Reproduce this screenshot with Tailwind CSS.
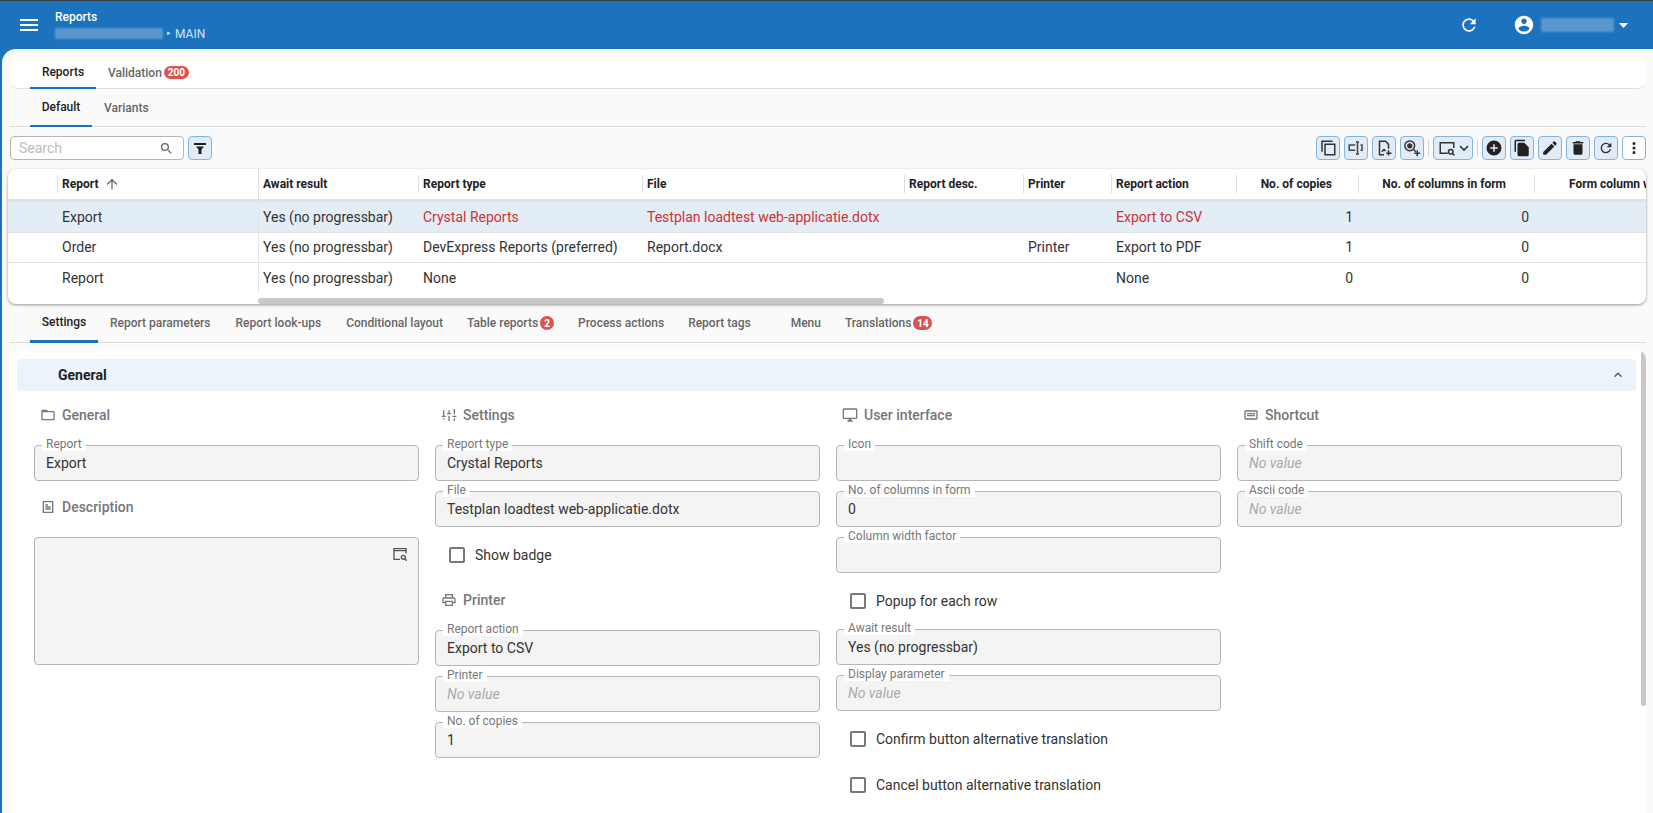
<!DOCTYPE html>
<html><head><meta charset="utf-8"><title>Reports</title>
<script src="https://cdn.jsdelivr.net/npm/@tailwindcss/browser@4"></script>
</head>
<body class="font-['Roboto',sans-serif] bg-[#1c72bc] overflow-hidden">
<div class="h-[813px] w-[1653px] flex flex-col overflow-hidden border-t border-[#3b4045]">
  <header class="h-[48px] shrink-0 flex items-center text-white">
    <svg class="ml-[17px] w-[24px] h-[24px]" viewBox="0 0 24 24" fill="#fff"><path d="M3 18h18v-2H3v2zm0-5h18v-2H3v2zm0-7v2h18V6H3z"/></svg>
    <div class="ml-[14px] flex flex-col">
      <span class="text-[12px] leading-[16px] font-medium">Reports</span>
      <div class="flex items-center mt-[1px]">
        <span class="w-[108px] h-[11px] bg-[#5a97cc] blur-[1px]"></span>
        <span class="ml-[4px] text-[7px] text-[#d5e6f5]">▸</span>
        <span class="ml-[4px] text-[12px] leading-[16px] text-[#d5e6f5]">MAIN</span>
      </div>
    </div>
    <svg class="ml-auto w-[20px] h-[20px]" viewBox="0 0 24 24" fill="#fff"><path d="M17.65 6.35A7.958 7.958 0 0 0 12 4c-4.42 0-7.99 3.58-7.99 8s3.57 8 7.99 8c3.73 0 6.84-2.55 7.73-6h-2.08A5.99 5.99 0 0 1 12 18c-3.31 0-6-2.69-6-6s2.69-6 6-6c1.66 0 3.14.69 4.22 1.78L13 11h7V4l-2.35 2.35z"/></svg>
    <svg class="ml-[34px] w-[22px] h-[22px]" viewBox="0 0 24 24" fill="#fff"><path d="M12 2C6.48 2 2 6.48 2 12s4.48 10 10 10 10-4.48 10-10S17.52 2 12 2zm0 3c1.66 0 3 1.34 3 3s-1.34 3-3 3-3-1.34-3-3 1.34-3 3-3zm0 14.2a7.2 7.2 0 0 1-6-3.22c.03-1.99 4-3.08 6-3.08 1.99 0 5.97 1.09 6 3.08a7.2 7.2 0 0 1-6 3.22z"/></svg>
    <span class="ml-[6px] w-[73px] h-[14px] bg-[#5a97cc] blur-[1px]"></span>
    <svg class="ml-[5px] mr-[25px] w-[9px] h-[5px]" viewBox="0 0 9 5" fill="#fff"><path d="M0 0h9L4.5 5z"/></svg>
  </header>

  <main class="flex-1 ml-[2px] bg-[#fafafa] rounded-tl-[14px] flex flex-col min-h-0 pt-[8px] pl-[6px] pr-[7px]">
    <!-- Top tabs -->
    <nav class="ml-[2px] h-[32px] shrink-0 bg-white rounded-[8px] border-b border-[#dddddd] flex text-[12px] font-medium pl-[20px]">
      <a class="w-[66px] flex items-center justify-center text-[#222] border-b-2 border-[#1c72bc] -mb-px">Reports</a>
      <a class="ml-[12px] flex items-center text-[#666]">Validation<span class="ml-[2px] w-[25px] h-[13px] rounded-full bg-[#d9534f] text-white text-[10px] font-bold flex items-center justify-center">200</span></a>
    </nav>
    <!-- Sub tabs -->
    <nav class="ml-[2px] h-[38px] shrink-0 border-b border-[#dddddd] flex text-[12px] font-medium pl-[20px]">
      <a class="w-[62px] flex items-center justify-center text-[#222] border-b-2 border-[#1c72bc] -mb-px">Default</a>
      <a class="ml-[12px] flex items-center text-[#666]">Variants</a>
    </nav>
    <!-- Toolbar -->
    <div class="ml-[2px] h-[24px] mt-[9px] shrink-0 flex items-center">
      <div class="w-[174px] h-[24px] bg-white rounded-[4px] border border-[#b5b5b5] flex items-center pl-[8px] pr-[9px] text-[14px] text-[#bcbcbc]">Search
        <svg class="ml-auto w-[15px] h-[15px]" viewBox="0 0 24 24" fill="#666"><path d="M15.5 14h-.79l-.28-.27A6.47 6.47 0 0 0 16 9.5 6.5 6.5 0 1 0 9.5 16c1.61 0 3.09-.59 4.23-1.57l.27.28v.79l5 4.99L20.49 19l-4.99-5zm-6 0C7.01 14 5 11.99 5 9.5S7.01 5 9.5 5 14 7.01 14 9.5 11.99 14 9.5 14z"/></svg>
      </div>
      <button class="ml-[4px] w-[24px] h-[24px] rounded-[4px] bg-[#e1ecf6] border border-[#82b4dc] flex items-center justify-center"><svg class="w-[14px] h-[14px]" viewBox="0 0 14 14" fill="#222"><path d="M1 2h12v2H1zM3 5.5h8L8.5 8.5V13h-3V8.5z"/></svg></button>
      <div class="ml-auto flex items-center gap-[4px]">
        <button class="w-[24px] h-[24px] rounded-[4px] bg-[#e1ecf6] border border-[#82b4dc] flex items-center justify-center"><svg class="w-[18px] h-[18px]" viewBox="0 0 24 24" fill="none" stroke="#333" stroke-width="2"><path d="M4 17V3h14"/><rect x="8" y="7" width="13" height="14"/></svg></button>
        <button class="w-[24px] h-[24px] rounded-[4px] bg-[#e1ecf6] border border-[#82b4dc] flex items-center justify-center"><svg class="w-[18px] h-[18px]" viewBox="0 0 24 24" fill="none" stroke="#444" stroke-width="2"><path d="M11 8H3v7h8M18 8h2v7h-2M12 4h4M12 20h4M14 4v16"/></svg></button>
        <button class="w-[24px] h-[24px] rounded-[4px] bg-[#e1ecf6] border border-[#82b4dc] flex items-center justify-center"><svg class="w-[18px] h-[18px]" viewBox="0 0 24 24" fill="none" stroke="#333" stroke-width="2"><path d="M12 21H6V3h8l4 4v6"/><path d="M18 15v7M15 19h7M9 17l3-3 2 2"/></svg></button>
        <button class="w-[24px] h-[24px] rounded-[4px] bg-[#e1ecf6] border border-[#82b4dc] flex items-center justify-center"><svg class="w-[18px] h-[18px]" viewBox="0 0 24 24" fill="none" stroke="#333" stroke-width="2"><circle cx="9" cy="9" r="6.5"/><circle cx="9" cy="9" r="2.5" fill="#333"/><path d="M14 14l3 3M19 15v8M15 19h8"/></svg></button>
        <span class="w-px h-[16px] bg-[#d5d5d5]"></span>
        <button class="w-[40px] h-[24px] rounded-[4px] bg-[#e1ecf6] border border-[#82b4dc] flex items-center justify-center gap-[3px]"><svg class="w-[18px] h-[18px]" viewBox="0 0 24 24" fill="none" stroke="#333" stroke-width="2"><path d="M13 19H3V5h18v7"/><circle cx="17" cy="17" r="3"/><path d="M19 19l3 3"/></svg><svg class="w-[10px] h-[7px]" viewBox="0 0 10 7" fill="none" stroke="#333" stroke-width="1.6"><path d="M1 1l4 4 4-4"/></svg></button>
        <span class="w-px h-[16px] bg-[#d5d5d5]"></span>
        <button class="w-[24px] h-[24px] rounded-[4px] bg-[#e1ecf6] border border-[#82b4dc] flex items-center justify-center"><svg class="w-[18px] h-[18px]" viewBox="0 0 24 24" fill="#222"><path d="M12 2a10 10 0 1 0 0 20 10 10 0 0 0 0-20zm5 11h-4v4h-2v-4H7v-2h4V7h2v4h4v2z"/></svg></button>
        <button class="w-[24px] h-[24px] rounded-[4px] bg-[#e1ecf6] border border-[#82b4dc] flex items-center justify-center"><svg class="w-[18px] h-[18px]" viewBox="0 0 24 24" fill="#222"><path d="M16 1H4a2 2 0 0 0-2 2v14h2V3h12V1zm-1 4H8a2 2 0 0 0-2 2v14a2 2 0 0 0 2 2h11a2 2 0 0 0 2-2V11l-6-6z"/></svg></button>
        <button class="w-[24px] h-[24px] rounded-[4px] bg-[#e1ecf6] border border-[#82b4dc] flex items-center justify-center"><svg class="w-[18px] h-[18px]" viewBox="0 0 24 24" fill="#222"><path d="M3 17.25V21h3.75L17.81 9.94l-3.75-3.75L3 17.25zM20.71 7.04a1 1 0 0 0 0-1.41l-2.34-2.34a1 1 0 0 0-1.41 0l-1.83 1.83 3.75 3.75 1.83-1.83z"/></svg></button>
        <button class="w-[24px] h-[24px] rounded-[4px] bg-[#e1ecf6] border border-[#82b4dc] flex items-center justify-center"><svg class="w-[18px] h-[18px]" viewBox="0 0 24 24" fill="#222"><path d="M6 19c0 1.1.9 2 2 2h8c1.1 0 2-.9 2-2V7H6v12zM19 4h-3.5l-1-1h-5l-1 1H5v2h14V4z"/></svg></button>
        <button class="w-[24px] h-[24px] rounded-[4px] bg-[#e1ecf6] border border-[#82b4dc] flex items-center justify-center"><svg class="w-[16px] h-[16px]" viewBox="0 0 24 24" fill="#333"><path d="M17.65 6.35A7.958 7.958 0 0 0 12 4c-4.42 0-7.99 3.58-7.99 8s3.57 8 7.99 8c3.73 0 6.84-2.55 7.73-6h-2.08A5.99 5.99 0 0 1 12 18c-3.31 0-6-2.69-6-6s2.69-6 6-6c1.66 0 3.14.69 4.22 1.78L13 11h7V4l-2.35 2.35z"/></svg></button>
        <button class="w-[24px] h-[24px] rounded-[4px] bg-white border border-[#82b4dc] flex items-center justify-center"><svg class="w-[18px] h-[18px]" viewBox="0 0 24 24" fill="#222"><path d="M12 8a2 2 0 1 0 0-4 2 2 0 0 0 0 4zm0 2a2 2 0 1 0 0 4 2 2 0 0 0 0-4zm0 6a2 2 0 1 0 0 4 2 2 0 0 0 0-4z"/></svg></button>
      </div>
    </div>
    <!-- Grid -->
    <section class="relative mt-[9px] shrink-0 h-[135px] bg-white rounded-[8px] shadow-[0_1px_3px_rgba(0,0,0,0.4)] overflow-hidden text-[14px] text-[#333]">
      <div class="grid grid-cols-[49px_201px_160px_224px_262px_119px_88px_125px_122px_176px_120px] h-[33px] border-b-[3px] border-[#dfe3e8] text-[12px] font-bold text-[#222] items-center">
        <span></span>
        <span class="h-[18px] border-l border-[#ddd] pl-[4px] flex items-center">Report<svg class="ml-[6px] w-[16px] h-[16px]" viewBox="0 0 24 24" fill="#666"><path d="M4 12l1.41 1.41L11 7.83V20h2V7.83l5.58 5.59L20 12l-8-8-8 8z"/></svg></span>
        <span class="h-full border-l border-[#ddd] pl-[4px] flex items-center">Await result</span>
        <span class="h-[18px] border-l border-[#ddd] pl-[4px] flex items-center">Report type</span>
        <span class="h-[18px] border-l border-[#ddd] pl-[4px] flex items-center">File</span>
        <span class="h-[18px] border-l border-[#ddd] pl-[4px] flex items-center">Report desc.</span>
        <span class="h-[18px] border-l border-[#ddd] pl-[4px] flex items-center">Printer</span>
        <span class="h-[18px] border-l border-[#ddd] pl-[4px] flex items-center">Report action</span>
        <span class="h-[18px] border-l border-[#ddd] pr-[26px] flex items-center justify-end">No. of copies</span>
        <span class="h-[18px] border-l border-[#ddd] pr-[28px] flex items-center justify-end">No. of columns in form</span>
        <span class="h-[18px] border-l border-[#ddd] pl-[34px] flex items-center whitespace-nowrap">Form column width</span>
      </div>
      <div class="grid grid-cols-[49px_201px_160px_224px_262px_119px_88px_125px_122px_176px_120px] h-[31px] bg-[#e3edf6] border-b border-[#dfe3e8] items-center">
        <span></span><span class="pl-[5px]">Export</span>
        <span class="h-full flex items-center border-l border-[#e4e4e4] pl-[4px]">Yes (no progressbar)</span>
        <span class="pl-[5px] text-[#cc3333]">Crystal Reports</span>
        <span class="pl-[5px] text-[#cc3333]">Testplan loadtest web-applicatie.dotx</span>
        <span></span><span></span>
        <span class="pl-[5px] text-[#cc3333]">Export to CSV</span>
        <span class="text-right pr-[5px]">1</span><span class="text-right pr-[5px]">0</span><span></span>
      </div>
      <div class="grid grid-cols-[49px_201px_160px_224px_262px_119px_88px_125px_122px_176px_120px] h-[30px] border-b border-[#e4e4e4] items-center">
        <span></span><span class="pl-[5px]">Order</span>
        <span class="h-full flex items-center border-l border-[#e4e4e4] pl-[4px]">Yes (no progressbar)</span>
        <span class="pl-[5px]">DevExpress Reports (preferred)</span>
        <span class="pl-[5px]">Report.docx</span>
        <span></span><span class="pl-[5px]">Printer</span>
        <span class="pl-[5px]">Export to PDF</span>
        <span class="text-right pr-[5px]">1</span><span class="text-right pr-[5px]">0</span><span></span>
      </div>
      <div class="grid grid-cols-[49px_201px_160px_224px_262px_119px_88px_125px_122px_176px_120px] h-[30px] items-center">
        <span></span><span class="pl-[5px]">Report</span>
        <span class="h-full flex items-center border-l border-[#e4e4e4] pl-[4px]">Yes (no progressbar)</span>
        <span class="pl-[5px]">None</span>
        <span></span><span></span><span></span>
        <span class="pl-[5px]">None</span>
        <span class="text-right pr-[5px]">0</span><span class="text-right pr-[5px]">0</span><span></span>
      </div>
      <div class="absolute left-[250px] bottom-0 w-[626px] h-[6px] rounded-full bg-[#c8c8c8]"></div>
    </section>
    <!-- Detail tabs -->
    <nav class="ml-[2px] h-[39px] shrink-0 border-b border-[#dddddd] flex text-[12px] font-medium pl-[20px]">
      <a class="w-[68px] flex items-center justify-center text-[#222] border-b-[3px] border-[#1c72bc] -mb-px">Settings</a>
      <a class="ml-[12px] flex items-center text-[#666]">Report parameters</a>
      <a class="ml-[25px] flex items-center text-[#666]">Report look-ups</a>
      <a class="ml-[25px] flex items-center text-[#666]">Conditional layout</a>
      <a class="ml-[24px] flex items-center text-[#666]">Table reports<span class="ml-[2px] w-[14px] h-[14px] rounded-full bg-[#d9534f] text-white text-[10px] font-bold flex items-center justify-center">2</span></a>
      <a class="ml-[24px] flex items-center text-[#666]">Process actions</a>
      <a class="ml-[24px] flex items-center text-[#666]">Report tags</a>
      <a class="ml-[40px] flex items-center text-[#666]">Menu</a>
      <a class="ml-[24px] flex items-center text-[#666]">Translations<span class="ml-[2px] w-[19px] h-[14px] rounded-full bg-[#d9534f] text-white text-[10px] font-bold flex items-center justify-center">14</span></a>
    </nav>
    <!-- Form -->
    <section class="relative ml-[2px] mt-[8px] flex-1 bg-white rounded-t-[8px] pt-[8px] pl-[7px] pr-[10px] overflow-hidden">
      <div class="h-[32px] bg-[#ecf3fa] rounded-[4px] flex items-center pl-[41px] pr-[10px] text-[14px] font-bold text-[#222]">General
        <svg class="ml-auto w-[16px] h-[16px]" viewBox="0 0 24 24" fill="#555"><path d="M7.41 15.41 12 10.83l4.59 4.58L18 14l-6-6-6 6z"/></svg>
      </div>
      <div class="grid grid-cols-[385px_385px_385px_385px] gap-x-[16px] pl-[17px] mt-[14px] text-[14px] text-[#333]">
        <!-- col 1 -->
        <div class="flex flex-col">
          <h3 class="h-[20px] mb-[20px] flex items-center pl-[6px] text-[14px] font-medium text-[#777]"><svg class="w-[16px] h-[16px] mr-[6px]" viewBox="0 0 24 24" fill="#777"><path d="M20 6h-8l-2-2H4c-1.1 0-2 .9-2 2v12c0 1.1.9 2 2 2h16c1.1 0 2-.9 2-2V8c0-1.1-.9-2-2-2zm0 12H4V8h16v10z"/></svg>General</h3>
          <div class="relative h-[36px] rounded-[4px] border border-[#b5b5b5] bg-[#f4f4f4] flex items-center pl-[11px] pt-[1px]"><label class="absolute -top-[9px] left-[7px] px-[4px] bg-white text-[12px] leading-[14px] text-[#777]">Report</label>Export</div>
          <h3 class="h-[20px] mt-[16px] mb-[20px] flex items-center pl-[6px] text-[14px] font-medium text-[#777]"><svg class="w-[16px] h-[16px] mr-[6px]" viewBox="0 0 24 24" fill="#777"><path d="M19 3H5a2 2 0 0 0-1 0v18h16V3zM6 5h12v14H6zM8 8h4v2H8zm0 3h8v2H8zm0 3h8v2H8z"/></svg>Description</h3>
          <div class="relative h-[128px] rounded-[4px] border border-[#b5b5b5] bg-[#f4f4f4]">
            <svg class="absolute top-[8px] right-[10px] w-[16px] h-[16px]" viewBox="0 0 24 24" fill="none" stroke="#555" stroke-width="2"><path d="M12 20H3V4h18v7M3 7h18"/><circle cx="17" cy="17" r="3"/><path d="M19 19l3 3"/></svg>
          </div>
        </div>
        <!-- col 2 -->
        <div class="flex flex-col">
          <h3 class="h-[20px] mb-[20px] flex items-center pl-[6px] text-[14px] font-medium text-[#777]"><svg class="w-[16px] h-[16px] mr-[6px]" viewBox="0 0 24 24" fill="#777"><path d="M3 17v2h2v-2zM3 5v8h2V5zM11 21h2v-8h-2zM11 5v4h2V5zM19 17v4h2v-4zM19 3v8h2V3zM1 15h6v-2H1zM9 9h6v2H9zM17 13h6v2h-6z"/></svg>Settings</h3>
          <div class="relative h-[36px] rounded-[4px] border border-[#b5b5b5] bg-[#f4f4f4] flex items-center pl-[11px] pt-[1px]"><label class="absolute -top-[9px] left-[7px] px-[4px] bg-white text-[12px] leading-[14px] text-[#777]">Report type</label>Crystal Reports</div>
          <div class="relative mt-[10px] h-[36px] rounded-[4px] border border-[#b5b5b5] bg-[#f4f4f4] flex items-center pl-[11px] pt-[1px]"><label class="absolute -top-[9px] left-[7px] px-[4px] bg-white text-[12px] leading-[14px] text-[#777]">File</label>Testplan loadtest web-applicatie.dotx</div>
          <div class="h-[36px] mt-[10px] flex items-center pl-[14px]"><span class="w-[16px] h-[16px] rounded-[2px] border-2 border-[#777] bg-white mr-[10px]"></span>Show badge</div>
          <h3 class="h-[20px] mt-[17px] mb-[20px] flex items-center pl-[6px] text-[14px] font-medium text-[#777]"><svg class="w-[16px] h-[16px] mr-[6px]" viewBox="0 0 24 24" fill="#777"><path d="M19 8h-1V3H6v5H5a3 3 0 0 0-3 3v6h4v4h12v-4h4v-6a3 3 0 0 0-3-3zM8 5h8v3H8zm8 14H8v-4h8zm4-4h-2v-2H6v2H4v-4a1 1 0 0 1 1-1h14a1 1 0 0 1 1 1z"/></svg>Printer</h3>
          <div class="relative h-[36px] rounded-[4px] border border-[#b5b5b5] bg-[#f4f4f4] flex items-center pl-[11px] pt-[1px]"><label class="absolute -top-[9px] left-[7px] px-[4px] bg-white text-[12px] leading-[14px] text-[#777]">Report action</label>Export to CSV</div>
          <div class="relative mt-[10px] h-[36px] rounded-[4px] border border-[#b5b5b5] bg-[#f4f4f4] flex items-center pl-[11px] pt-[1px] italic text-[#aaa]"><label class="absolute -top-[9px] left-[7px] px-[4px] bg-white text-[12px] leading-[14px] text-[#777] not-italic">Printer</label>No value</div>
          <div class="relative mt-[10px] h-[36px] rounded-[4px] border border-[#b5b5b5] bg-[#f4f4f4] flex items-center pl-[11px] pt-[1px]"><label class="absolute -top-[9px] left-[7px] px-[4px] bg-white text-[12px] leading-[14px] text-[#777]">No. of copies</label>1</div>
        </div>
        <!-- col 3 -->
        <div class="flex flex-col">
          <h3 class="h-[20px] mb-[20px] flex items-center pl-[6px] text-[14px] font-medium text-[#777]"><svg class="w-[16px] h-[16px] mr-[6px]" viewBox="0 0 24 24" fill="#777"><path d="M21 2H3a2 2 0 0 0-2 2v12a2 2 0 0 0 2 2h7v2H8v2h8v-2h-2v-2h7a2 2 0 0 0 2-2V4a2 2 0 0 0-2-2zm0 14H3V4h18z"/></svg>User interface</h3>
          <div class="relative h-[36px] rounded-[4px] border border-[#b5b5b5] bg-[#f4f4f4] flex items-center pl-[11px] pt-[1px]"><label class="absolute -top-[9px] left-[7px] px-[4px] bg-white text-[12px] leading-[14px] text-[#777]">Icon</label></div>
          <div class="relative mt-[10px] h-[36px] rounded-[4px] border border-[#b5b5b5] bg-[#f4f4f4] flex items-center pl-[11px] pt-[1px]"><label class="absolute -top-[9px] left-[7px] px-[4px] bg-white text-[12px] leading-[14px] text-[#777]">No. of columns in form</label>0</div>
          <div class="relative mt-[10px] h-[36px] rounded-[4px] border border-[#b5b5b5] bg-[#f4f4f4] flex items-center pl-[11px] pt-[1px]"><label class="absolute -top-[9px] left-[7px] px-[4px] bg-white text-[12px] leading-[14px] text-[#777]">Column width factor</label></div>
          <div class="h-[36px] mt-[10px] flex items-center pl-[14px]"><span class="w-[16px] h-[16px] rounded-[2px] border-2 border-[#777] bg-white mr-[10px]"></span>Popup for each row</div>
          <div class="relative mt-[10px] h-[36px] rounded-[4px] border border-[#b5b5b5] bg-[#f4f4f4] flex items-center pl-[11px] pt-[1px]"><label class="absolute -top-[9px] left-[7px] px-[4px] bg-white text-[12px] leading-[14px] text-[#777]">Await result</label>Yes (no progressbar)</div>
          <div class="relative mt-[10px] h-[36px] rounded-[4px] border border-[#b5b5b5] bg-[#f4f4f4] flex items-center pl-[11px] pt-[1px] italic text-[#aaa]"><label class="absolute -top-[9px] left-[7px] px-[4px] bg-white text-[12px] leading-[14px] text-[#777] not-italic">Display parameter</label>No value</div>
          <div class="h-[36px] mt-[10px] flex items-center pl-[14px]"><span class="w-[16px] h-[16px] rounded-[2px] border-2 border-[#777] bg-white mr-[10px]"></span>Confirm button alternative translation</div>
          <div class="h-[36px] mt-[10px] flex items-center pl-[14px]"><span class="w-[16px] h-[16px] rounded-[2px] border-2 border-[#777] bg-white mr-[10px]"></span>Cancel button alternative translation</div>
        </div>
        <!-- col 4 -->
        <div class="flex flex-col">
          <h3 class="h-[20px] mb-[20px] flex items-center pl-[6px] text-[14px] font-medium text-[#777]"><svg class="w-[16px] h-[16px] mr-[6px]" viewBox="0 0 24 24" fill="#777"><path d="M20 5H4a2 2 0 0 0-2 2v10a2 2 0 0 0 2 2h16a2 2 0 0 0 2-2V7a2 2 0 0 0-2-2zm0 12H4V7h16zM6 9h12v2H6zm0 3h12v2H6z"/></svg>Shortcut</h3>
          <div class="relative h-[36px] rounded-[4px] border border-[#b5b5b5] bg-[#f4f4f4] flex items-center pl-[11px] pt-[1px] italic text-[#aaa]"><label class="absolute -top-[9px] left-[7px] px-[4px] bg-white text-[12px] leading-[14px] text-[#777] not-italic">Shift code</label>No value</div>
          <div class="relative mt-[10px] h-[36px] rounded-[4px] border border-[#b5b5b5] bg-[#f4f4f4] flex items-center pl-[11px] pt-[1px] italic text-[#aaa]"><label class="absolute -top-[9px] left-[7px] px-[4px] bg-white text-[12px] leading-[14px] text-[#777] not-italic">Ascii code</label>No value</div>
        </div>
      </div>
      <div class="absolute right-0 top-0 w-[5px] h-[355px] rounded-full bg-[#c8c8c8]"></div>
    </section>
  </main>
</div>
</body></html>
